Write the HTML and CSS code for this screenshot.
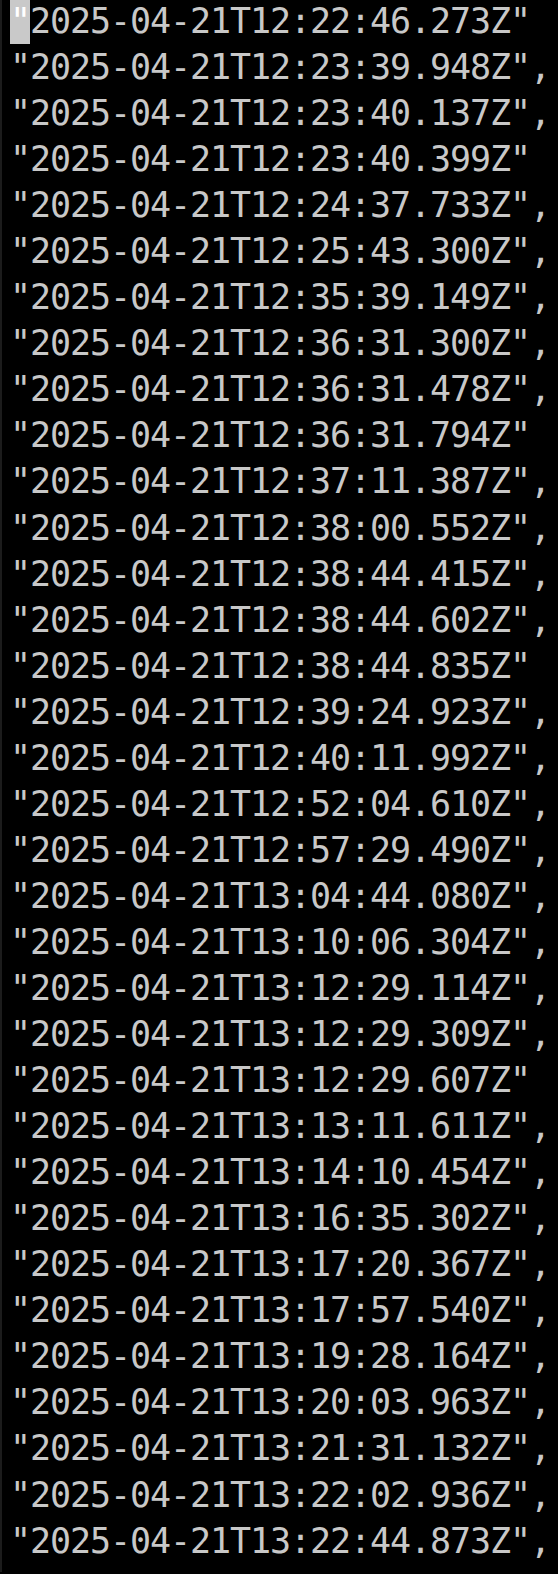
FILE: index.html
```html
<!DOCTYPE html>
<html>
<head>
<meta charset="utf-8">
<link rel="stylesheet" href="styles.css">
</head>
<body>
<div class="term">
<div class="line"><span class="cursor">"</span>2025-04-21T12:22:46.273Z"</div>
<div class="line">"2025-04-21T12:23:39.948Z",</div>
<div class="line">"2025-04-21T12:23:40.137Z",</div>
<div class="line">"2025-04-21T12:23:40.399Z"</div>
<div class="line">"2025-04-21T12:24:37.733Z",</div>
<div class="line">"2025-04-21T12:25:43.300Z",</div>
<div class="line">"2025-04-21T12:35:39.149Z",</div>
<div class="line">"2025-04-21T12:36:31.300Z",</div>
<div class="line">"2025-04-21T12:36:31.478Z",</div>
<div class="line">"2025-04-21T12:36:31.794Z"</div>
<div class="line">"2025-04-21T12:37:11.387Z",</div>
<div class="line">"2025-04-21T12:38:00.552Z",</div>
<div class="line">"2025-04-21T12:38:44.415Z",</div>
<div class="line">"2025-04-21T12:38:44.602Z",</div>
<div class="line">"2025-04-21T12:38:44.835Z"</div>
<div class="line">"2025-04-21T12:39:24.923Z",</div>
<div class="line">"2025-04-21T12:40:11.992Z",</div>
<div class="line">"2025-04-21T12:52:04.610Z",</div>
<div class="line">"2025-04-21T12:57:29.490Z",</div>
<div class="line">"2025-04-21T13:04:44.080Z",</div>
<div class="line">"2025-04-21T13:10:06.304Z",</div>
<div class="line">"2025-04-21T13:12:29.114Z",</div>
<div class="line">"2025-04-21T13:12:29.309Z",</div>
<div class="line">"2025-04-21T13:12:29.607Z"</div>
<div class="line">"2025-04-21T13:13:11.611Z",</div>
<div class="line">"2025-04-21T13:14:10.454Z",</div>
<div class="line">"2025-04-21T13:16:35.302Z",</div>
<div class="line">"2025-04-21T13:17:20.367Z",</div>
<div class="line">"2025-04-21T13:17:57.540Z",</div>
<div class="line">"2025-04-21T13:19:28.164Z",</div>
<div class="line">"2025-04-21T13:20:03.963Z",</div>
<div class="line">"2025-04-21T13:21:31.132Z",</div>
<div class="line">"2025-04-21T13:22:02.936Z",</div>
<div class="line">"2025-04-21T13:22:44.873Z",</div>
</div>
</body>
</html>
```
FILE: styles.css
```css
html, body {
  margin: 0;
  padding: 0;
  background: #000;
  height: 100%;
  overflow: hidden;
}
.term {
  border-left: 2px solid #1c1c1c;
  min-height: 100%;
  box-sizing: border-box;
  padding-left: 8px;
  margin-top: -2px;
  font-family: "DejaVu Sans Mono", monospace;
  font-size: 35px;
  letter-spacing: -1.07px;
  line-height: 46.06px;
  color: #c8c8c8;
}
.line {
  height: 46.06px;
  white-space: pre;
}
.cursor {
  display: inline-block;
  background: #c9c9c9;
  color: #fff;
  width: 20px;
  height: 46px;
  vertical-align: top;
}
```
